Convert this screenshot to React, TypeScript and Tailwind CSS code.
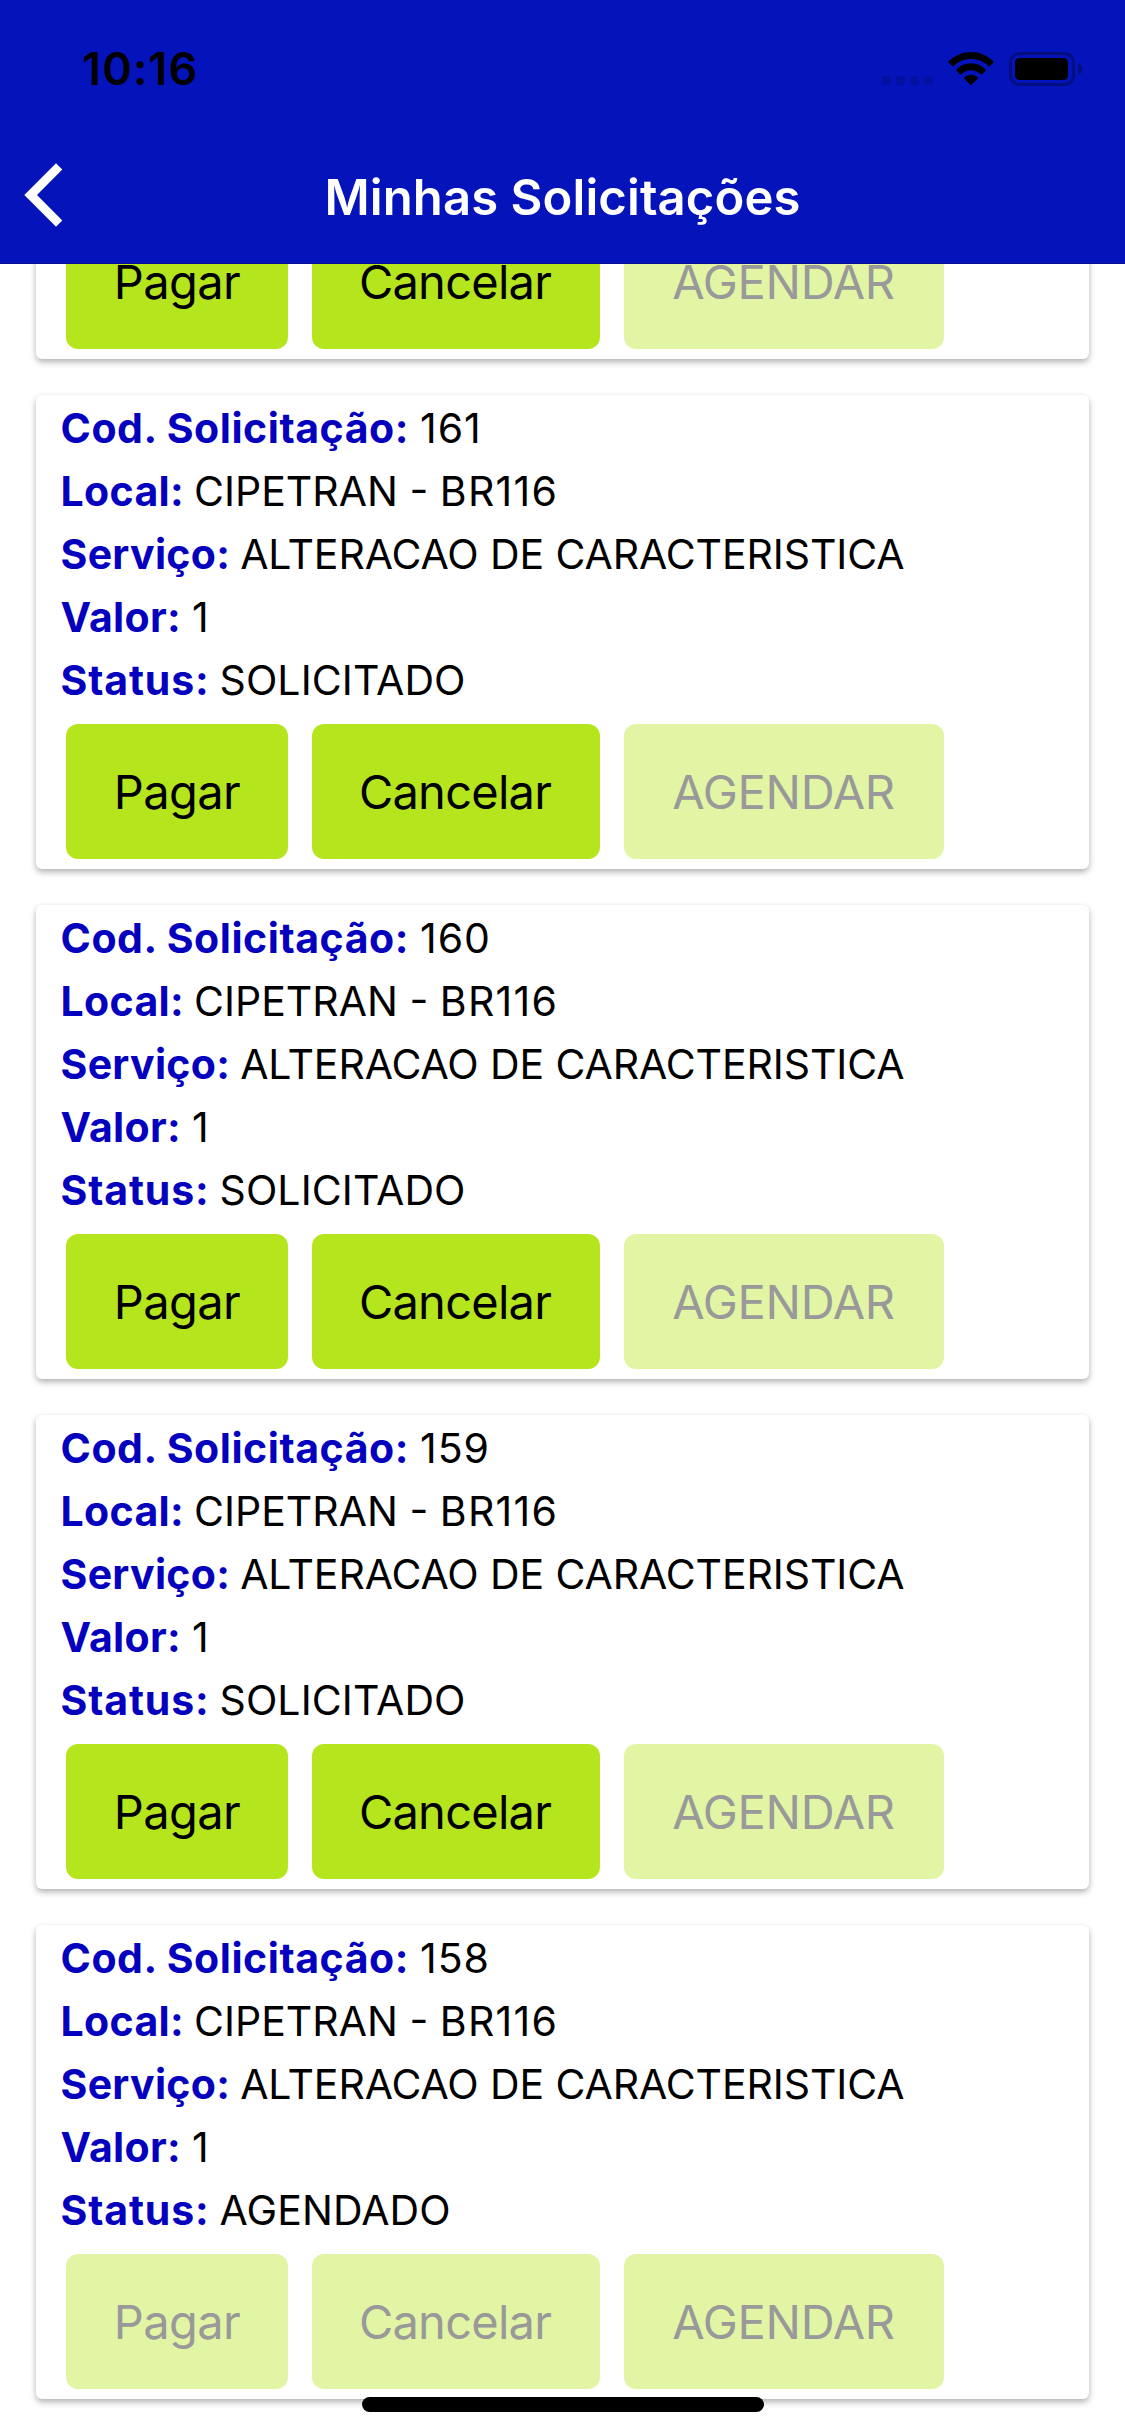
import React from "react";

type Request = { code: string; status: string; closed?: boolean };

const requests: Request[] = [
  { code: "161", status: "SOLICITADO" },
  { code: "160", status: "SOLICITADO" },
  { code: "159", status: "SOLICITADO" },
  { code: "158", status: "AGENDADO", closed: true },
];

function StatusBar() {
  return (
    <div className="flex h-[132px] items-start justify-between pr-[42px] pl-[82px]">
      <span className="mt-[42px] text-[45px] leading-[54px] font-semibold tracking-[1.1px] text-black">10:16</span>
      <div className="mt-[52px] flex items-start">
        <div className="mt-6 mr-[15px] flex gap-[5px]">
          {[0, 1, 2, 3].map((n) => (
            <span key={n} className="size-[9px] rounded-[3px] bg-[#0410a0]" />
          ))}
        </div>
        <svg className="mr-[15px] h-[34px] w-[46px]" viewBox="0 0 46 34" fill="#000">
          <path d="M.7 9.3C7 3.3 14.8 0 23 0s16 3.300 22.300 9.300c.5.500.5 1 0 1.500l-3.500 3.300c-.4.400-.9.400-1.300 0C35.700 9.600 29.500 7 23 7S10.300 9.600 5.500 14.100c-.4.400-.9.400-1.300 0L.7 10.800c-.5-.5-.5-1 0-1.500z" />
          <path d="M8.400 17.400C12.400 13.400 17.500 11.200 23 11.200s10.600 2.200 14.600 6.200c.4.400.4.900 0 1.300l-3.600 3.500c-.4.400-.9.400-1.300 0C30 19.700 26.600 18.300 23 18.300s-7 1.400-9.700 3.900c-.4.400-.9.400-1.300 0l-3.600-3.500c-.4-.4-.4-.9 0-1.300z" />
          <path d="M16.400 25.300C18.200 23.700 20.500 22.700 23 22.700s4.800 1 6.600 2.600c.5.400.5.900.1 1.300l-6 6.100c-.4.400-1 .4-1.400 0l-6-6.100c-.4-.4-.4-.9.100-1.300z" />
        </svg>
        <svg className="h-[34px] w-[74px]" viewBox="0 0 74 34">
          <rect x="1.500" y="1.500" width="63" height="31" rx="9" fill="none" stroke="#040e80" strokeWidth="3" />
          <rect x="6" y="6" width="53" height="22" rx="4.500" fill="#000" />
          <path d="M69 11c2.500 1 4.200 3.200 4.200 6s-1.700 5-4.200 6z" fill="#040e80" />
        </svg>
      </div>
    </div>
  );
}

function Header() {
  return (
    <header className="z-10 shrink-0 border-b border-[#040e8c] bg-[#0513bb]">
      <StatusBar />
      <div className="grid h-[131px] grid-cols-[200px_1fr_200px] items-center">
        <button className="pl-6" aria-label="Voltar">
          <svg className="-mt-1.5 h-16 w-10" viewBox="0 0 40 64" fill="#fff">
            <path d="M32 .3 38.300 6.600 13 32 38.300 57.400 32 63.700.3 32z" />
          </svg>
        </button>
        <h1 className="text-center text-[49px] leading-none font-semibold tracking-[0.1px] whitespace-nowrap text-white">
          Minhas Solicitações
        </h1>
      </div>
    </header>
  );
}

function Row({ label, labelClass, children }: { label: string; labelClass: string; children: React.ReactNode }) {
  return (
    <p className="flex h-[63px] items-center text-[41px] leading-[63px] whitespace-nowrap text-black">
      <span className={`${labelClass} font-bold text-[#0400be]`}>{label}</span>
      {children}
    </p>
  );
}

function Action({ label, disabled, className }: { label: string; disabled?: boolean; className: string }) {
  return (
    <button
      disabled={disabled}
      className={`${className} h-[135px] rounded-xl text-[47px] leading-none ${
        disabled ? "bg-[#e1f5a5] text-[#999999]" : "bg-[#b5e61d] text-black"
      }`}
    >
      {label}
    </button>
  );
}

function Card({ closed, children }: { closed?: boolean; children?: React.ReactNode }) {
  return (
    <article className="flex h-[474px] shrink-0 flex-col justify-between rounded-md bg-white pt-0.5 pb-2.5 pl-[24.5px] shadow-[0_3px_6px_rgba(0,0,0,0.31)]">
      <div>{children}</div>
      <div className="ml-[5.5px] flex gap-6">
        <Action label="Pagar" disabled={closed} className="w-[222px] tracking-[-0.6px]" />
        <Action label="Cancelar" disabled={closed} className="w-[288px] pr-0.5 tracking-[-0.75px]" />
        <Action label="AGENDAR" disabled className="w-[320px] pr-px tracking-[-0.28px]" />
      </div>
    </article>
  );
}

function RequestCard({ code, status, closed }: Request) {
  return (
    <Card closed={closed}>
      <Row label="Cod. Solicitação:" labelClass="mr-[11px] tracking-[0.55px]">
        <span className="tracking-[1px]">{code}</span>
      </Row>
      <Row label="Local:" labelClass="mr-2.5 tracking-[0.35px]">
        <span>CIPETRAN -&nbsp;</span>
        <span className="tracking-[1.3px]">BR116</span>
      </Row>
      <Row label="Serviço:" labelClass="mr-2.5 tracking-[0.3px]">
        <span className="tracking-[-0.1px]">ALTERACAO DE CARACTERISTICA</span>
      </Row>
      <Row label="Valor:" labelClass="mr-[11px] tracking-[0.3px]">
        <span>1</span>
      </Row>
      <Row label="Status:" labelClass="mr-2.5 tracking-[0.85px]">
        <span className="tracking-[0.1px]">{status}</span>
      </Row>
    </Card>
  );
}

export default function App() {
  return (
    <div className="relative flex h-[2436px] w-[1125px] flex-col overflow-hidden bg-white font-[Inter,sans-serif]">
      <Header />
      <main className="flex min-h-0 flex-1 flex-col justify-end gap-9 overflow-hidden px-9 pb-[37px]">
        <Card />
        {requests.map((r) => (
          <RequestCard key={r.code} {...r} />
        ))}
      </main>
      <div className="absolute bottom-6 left-[362px] h-[15px] w-[402px] rounded-full bg-black" />
    </div>
  );
}
